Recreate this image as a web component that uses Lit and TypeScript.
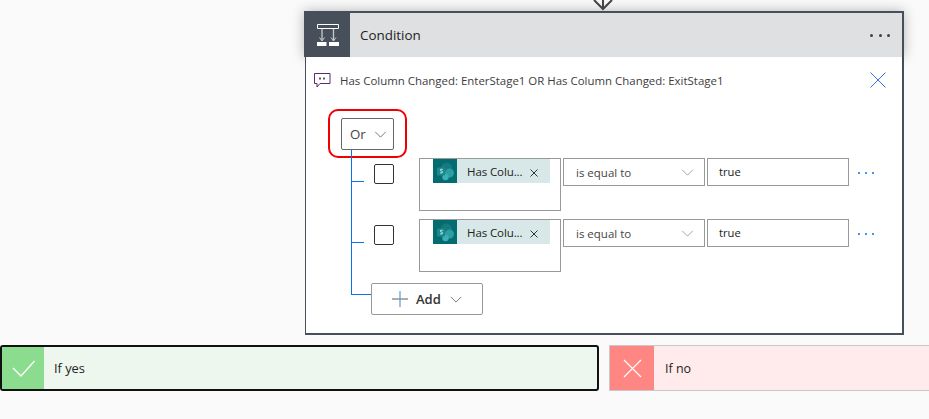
import { LitElement, html, css, svg } from "lit";
import { customElement } from "lit/decorators.js";

const chevron = (stroke: string, w = 14, h = 8) => html`<svg class="chev" width=${w} height=${h} viewBox="0 0 14 8"><path d="M1 1l6 6 6-6" fill="none" stroke=${stroke} stroke-width="1"/></svg>`;

const spLogo = svg`
  <circle cx="13.500" cy="9" r="5.500" fill="#17797d"/>
  <circle cx="16.500" cy="14" r="4.500" fill="#2b9ea3"/>
  <circle cx="12.500" cy="18" r="3.200" fill="#3cb0b6"/>
  <rect x="4" y="8.500" width="8" height="8" rx="1" fill="#1a8a8c"/>
  <path d="M9.600 10.500c-.6-.4-2.300-.5-2.300.5 0 1 2.300.9 2.300 2.100 0 1-1.900 1-2.600.5" fill="none" stroke="#e8f4f4" stroke-width=".9"/>`;

@customElement("app-root")
export class AppRoot extends LitElement {
  static styles = css`
    :host { display: block; width: 929px; height: 419px; overflow: hidden; background: #fafafa;
      font-family: "Open Sans", "Noto Sans", sans-serif; font-size: 12px; color: #2b2b2b; }
    .canvas { display: flex; flex-direction: column; width: 929px; }
    .arrow { display: block; margin-left: 593px; height: 11px; flex: none; position: relative; z-index: 2; }
    .card { margin-left: 305px; width: 599px; height: 324px; box-sizing: border-box; border: 2px solid #474f5a; border-top: 0; border-left-width: 1px;
      background: #fff; display: flex; flex-direction: column; }
    .head { margin: 0 -2px; height: 46px; flex: none; box-sizing: border-box; border: 2px solid #474f5a; border-bottom: 0;
      background: #dfe0e2; display: flex; align-items: center; box-shadow: 0 0 12px rgba(0,0,0,.28); }
    .head-icon { width: 44px; height: 44px; background: #474f5a; display: flex; align-items: center; justify-content: center; flex: none; }
    .head-title { margin-left: 10px; font-size: 13.4px; color: #222; flex: 1; }
    .head-more { display: flex; gap: 5.5px; margin-right: 12px; }
    .head-more i { width: 3px; height: 3px; border-radius: 50%; background: #39424e; }
    .body { flex: 1; background: #fff; display: flex; flex-direction: column; position: relative; }
    .comment { height: 46px; display: flex; align-items: center; padding-left: 8px; flex: none; font-size: 11.45px; color: #3d3d3d; }
    .comment svg { margin-right: 9px; flex: none; }
    .comment span { flex: 1; }
    .comment .close { margin-right: 16px; }
    .ring { align-self: flex-start; margin: 6px 0 0 22px; border: 2px solid #f00000; border-radius: 10px; padding: 7px 11px 6px 11px; }
    .or { width: 53px; height: 32px; box-sizing: border-box; border: 1px solid #666; border-radius: 2px; background: #fff;
      display: flex; align-items: center; padding-left: 8px; gap: 8px; font-size: 13.3px; color: #444; }
    .tree { margin-left: 45px; position: relative; display: flex; flex-direction: column; gap: 8px; }
    .trunk { position: absolute; left: 0; top: -8px; width: 19px; height: 144px; border-left: 1px solid #0f6fe8; border-bottom: 1px solid #0f6fe8; }
    .row { display: flex; align-items: flex-start; height: 53px; position: relative; }
    .row::before { content: ""; position: absolute; left: 1px; top: 23px; width: 12px; height: 1px; background: #0f6fe8; }
    .check { width: 20px; height: 20px; box-sizing: border-box; border: 1px solid #333; border-radius: 2px; margin: 6px 25px 0 23px; flex: none; background: #fff; }
    .field { width: 142px; height: 53px; box-sizing: border-box; border: 1px solid #999; flex: none; padding-left: 13px; }
    .chip { width: 117px; height: 24px; background: #d8e8e8; display: flex; align-items: center; }
    .chip-icon { width: 24px; height: 24px; background: #036c70; flex: none; display: block; }
    .chip-text { margin-left: 10px; font-size: 11.5px; color: #222; flex: 1; white-space: nowrap; letter-spacing: -.1px; }
    .chip-x { margin: 4px 12px 0 0; flex: none; }
    .select, .value { width: 142px; height: 28px; box-sizing: border-box; border: 1px solid #999; flex: none; margin-left: 2px;
      display: flex; align-items: center; font-size: 11.5px; background: #fff; }
    .select { padding: 0 10px 0 12px; justify-content: space-between; color: #444; }
    .value { padding-left: 11px; color: #222; padding-bottom: 2px; font-size: 11.2px; }
    .row-more { display: flex; gap: 5px; margin: 14px 0 0 9px; }
    .row-more i { width: 2px; height: 2px; background: #4a90f0; }
    .add { width: 112px; height: 32px; box-sizing: border-box; border: 1px solid #999; border-radius: 2px; margin: 3px 0 0 20px; background: #fff;
      display: flex; align-items: center; padding-left: 20px; gap: 8px; font-weight: 600; font-size: 13px; color: #333; position: relative; }
    .add .chev { margin-left: 1px; }
    .branches { display: flex; gap: 10px; margin-top: 10px; width: 1000px; }
    .branch { height: 46px; box-sizing: border-box; display: flex; align-items: center; font-size: 12.5px; color: #222; }
    .yes { width: 599px; background: #edf7ee; border: 2px solid #111; border-radius: 3px; flex: none; }
    .no { width: 381px; background: #ffebeb; border: 1px solid #c8c8c8; flex: none; }
    .b-icon { width: 44px; align-self: stretch; display: flex; align-items: center; justify-content: center; flex: none; }
    .yes .b-icon { background: #8cdc90; width: 42px; }
    .no .b-icon { background: #ff8783; }
    .b-label { margin-left: 11px; }
    .yes .b-label { margin-left: 10px; font-size: 12.8px; }
  `;

  private row() {
    return html`<div class="row">
      <div class="check"></div>
      <div class="field"><div class="chip">
        <svg class="chip-icon" viewBox="0 0 24 24">${spLogo}</svg>
        <span class="chip-text">Has Colu...</span>
        <svg class="chip-x" width="8" height="8" viewBox="0 0 8 8"><path d="M.5 .5l7 7M7.500 .5l-7 7" stroke="#333" stroke-width="1"/></svg>
      </div></div>
      <div class="select"><span>is equal to</span>${chevron("#8a9aa8", 13, 7)}</div>
      <div class="value">true</div>
      <div class="row-more"><i></i><i></i><i></i></div>
    </div>`;
  }

  render() {
    return html`<div class="canvas">
      <svg class="arrow" width="20" height="11" viewBox="0 0 20 11"><path d="M10 0v9M1 0l9 9 9-9" fill="none" stroke="#444" stroke-width="2"/></svg>
      <div class="card">
        <div class="head">
          <div class="head-icon">
            <svg width="22" height="22" viewBox="0 0 22 22"><path d="M.5 .5h21v4H.5z" fill="none" stroke="#fff" stroke-width="1"/><path d="M5 5v12M16.500 5v12" stroke="#c8cbd0" stroke-width="1.300"/><path d="M2.500 13.500L5 17l2.500-3.500M14 13.500l2.500 3.500 2.500-3.500" fill="none" stroke="#c8cbd0" stroke-width="1"/><rect x="0" y="18" width="9.500" height="4" fill="#fff"/><rect x="12" y="18" width="10" height="4" fill="#fff"/></svg>
          </div>
          <span class="head-title">Condition</span>
          <div class="head-more"><i></i><i></i><i></i></div>
        </div>
        <div class="body">
          <div class="comment">
            <svg width="17" height="15" viewBox="0 0 17 15"><path d="M.5 .5h15.500v10H6l-3 3.500v-3.500H.5z" fill="none" stroke="#5b2a6e" stroke-width="1"/><path d="M6 4.500v2M10 4.500v2" stroke="#333" stroke-width="1.600"/></svg>
            <span>Has Column Changed: EnterStage1 OR Has Column Changed: ExitStage1</span>
            <svg class="close" width="16" height="16" viewBox="0 0 16 16"><path d="M.5 .5l15 15M15.500 .5l-15 15" stroke="#3a6ff0" stroke-width="1"/></svg>
          </div>
          <div class="ring"><div class="or"><span>Or</span>${chevron("#666", 13, 7)}</div></div>
          <div class="tree">
            <div class="trunk"></div>
            ${this.row()}
            ${this.row()}
            <div class="add">
              <svg width="16" height="16" viewBox="0 0 16 16"><path d="M0 8h16" stroke="#777" stroke-width="1.200"/><path d="M8 0v16" stroke="#5a9bd5" stroke-width="1.200"/></svg>
              <span>Add</span>
              ${chevron("#666", 12, 7)}
            </div>
          </div>
        </div>
      </div>
      <div class="branches">
        <div class="branch yes">
          <div class="b-icon"><svg width="23" height="17" viewBox="0 0 23 17"><path d="M1 8l8 8L22.500 1" fill="none" stroke="#fff" stroke-width="1.300"/></svg></div>
          <span class="b-label">If yes</span>
        </div>
        <div class="branch no">
          <div class="b-icon"><svg width="19" height="19" viewBox="0 0 19 19"><path d="M1 1l17 17M18 1L1 18" stroke="#fff" stroke-width="1.100"/></svg></div>
          <span class="b-label">If no</span>
        </div>
      </div>
    </div>`;
  }
}
